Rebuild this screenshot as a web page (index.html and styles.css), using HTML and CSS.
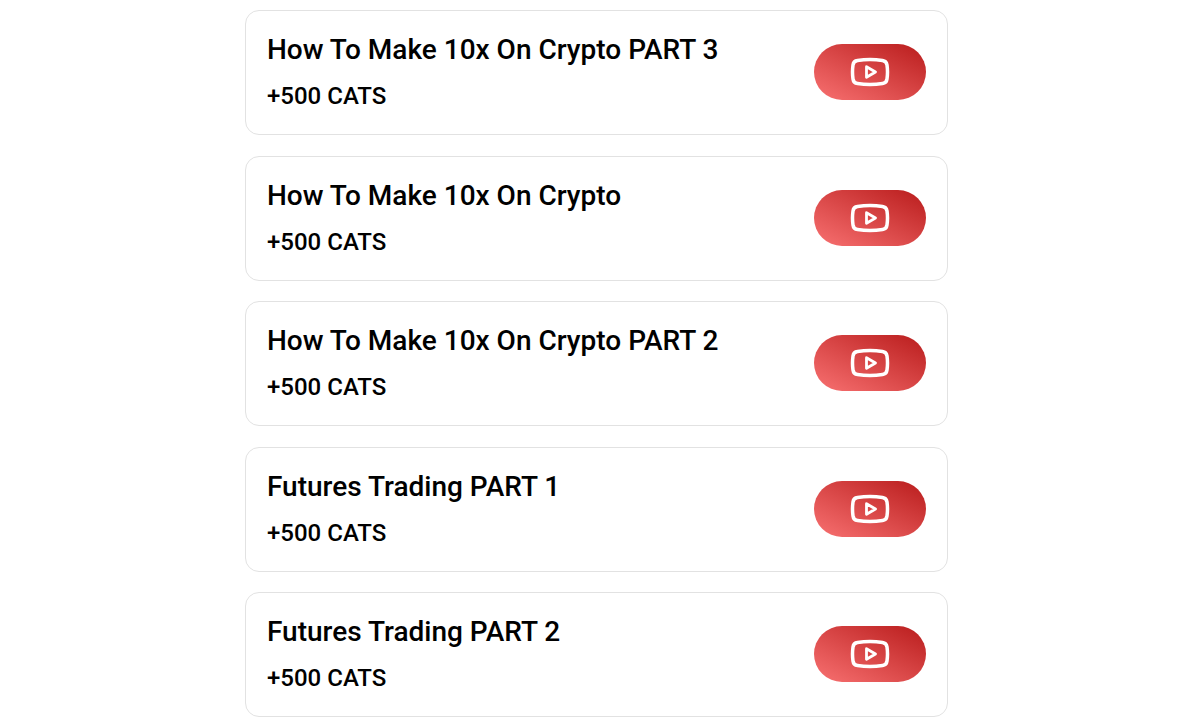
FILE: index.html
```html
<!DOCTYPE html>
<html lang="en">
<head>
  <meta charset="UTF-8">
  <meta name="viewport" content="width=device-width, initial-scale=1.0">
  <title>Tasks</title>
  <link rel="stylesheet" href="styles.css">
</head>
<body>

  <svg class="sprite" aria-hidden="true">
    <symbol id="video-icon" viewBox="0 0 40 30">
      <path d="M7.500 3.500 Q20 1.700 32.500 3.500 Q36.500 4 37 8 Q38 15 37 22 Q36.500 26 32.500 26.500 Q20 28.300 7.500 26.500 Q3.500 26 3 22 Q2 15 3 8 Q3.500 4 7.500 3.500 Z" fill="none" stroke="#fff" stroke-width="3.500" stroke-linejoin="round"/>
      <path d="M16.500 9.700 L25.500 15 L16.500 20.300 Z" fill="none" stroke="#fff" stroke-width="2.800" stroke-linejoin="round"/>
    </symbol>
  </svg>

  <main class="task-list">
    <div class="task">
      <div class="task-info">
        <h2>How To Make 10x On Crypto PART 3</h2>
        <p>+500 CATS</p>
      </div>
      <button class="watch-btn" aria-label="Watch video"><svg><use href="#video-icon"/></svg></button>
    </div>
    <div class="task">
      <div class="task-info">
        <h2>How To Make 10x On Crypto</h2>
        <p>+500 CATS</p>
      </div>
      <button class="watch-btn" aria-label="Watch video"><svg><use href="#video-icon"/></svg></button>
    </div>
    <div class="task">
      <div class="task-info">
        <h2>How To Make 10x On Crypto PART 2</h2>
        <p>+500 CATS</p>
      </div>
      <button class="watch-btn" aria-label="Watch video"><svg><use href="#video-icon"/></svg></button>
    </div>
    <div class="task">
      <div class="task-info">
        <h2>Futures Trading PART 1</h2>
        <p>+500 CATS</p>
      </div>
      <button class="watch-btn" aria-label="Watch video"><svg><use href="#video-icon"/></svg></button>
    </div>
    <div class="task">
      <div class="task-info">
        <h2>Futures Trading PART 2</h2>
        <p>+500 CATS</p>
      </div>
      <button class="watch-btn" aria-label="Watch video"><svg><use href="#video-icon"/></svg></button>
    </div>
  </main>

</body>
</html>
```

FILE: styles.css
```css
* {
  box-sizing: border-box;
}

body {
  margin: 0;
  padding-left: 6px;
  background: #fff;
  color: #000;
  font-family: Roboto, sans-serif;
}

.sprite {
  display: none;
}

.task-list {
  display: flex;
  flex-direction: column;
  justify-content: space-between;
  gap: 20px;
  max-width: 703px;
  min-height: 100vh;
  margin: 0 auto;
  padding: 10px 0 3px;
}

.task {
  display: flex;
  align-items: center;
  justify-content: space-between;
  gap: 20px;
  padding: 20px 21px 21px;
  border: 1px solid #e2e2e2;
  border-radius: 14px;
}

.task-info h2,
.task-info p {
  margin: 0;
  font-weight: 500;
}

.task-info h2 {
  margin-bottom: 10px;
  font-size: 28px;
  line-height: 38px;
}

.task-info p {
  font-size: 24px;
  line-height: 34px;
}

.watch-btn {
  display: flex;
  flex-shrink: 0;
  align-items: center;
  justify-content: center;
  width: 112px;
  height: 56px;
  padding: 0;
  border: none;
  border-radius: 28px;
  background: linear-gradient(to top right, #f87171, #b91c1c);
  cursor: pointer;
}

.watch-btn svg {
  width: 40px;
  height: 30px;
}
```
